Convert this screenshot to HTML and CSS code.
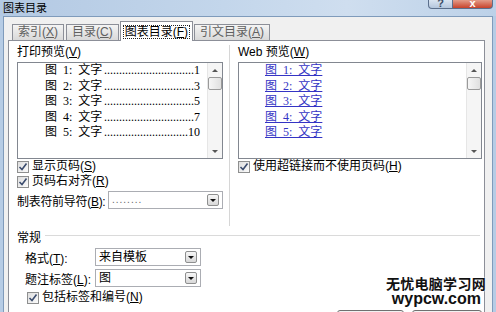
FILE: index.html
```html
<!DOCTYPE html>
<html lang="zh-CN">
<head>
    <meta charset="UTF-8">
    <title>图表目录</title>
    <link rel="stylesheet" href="styles.css">
</head>
<body>
    <div class="titlebar">
        <span class="title">图表目录</span>
        <div class="caption-btns">
            <span class="cap help">?</span>
            <span class="cap close">x</span>
        </div>
    </div>

    <div class="client">
        <div class="tabs">
            <div class="tab">索引(<u>X</u>)</div>
            <div class="tab">目录(<u>C</u>)</div>
            <div class="tab active"><span class="focus">图表目录(<u>F</u>)</span></div>
            <div class="tab">引文目录(<u>A</u>)</div>
        </div>

        <div class="panel">
            <div class="columns">
                <div class="col left">
                    <div class="label">打印预览(<u>V</u>)</div>
                    <div class="listbox">
                        <ul class="toc">
                            <li><span class="fig">图 1: 文字</span><span class="dots">..............................................</span><span class="pg">1</span></li>
                            <li><span class="fig">图 2: 文字</span><span class="dots">..............................................</span><span class="pg">3</span></li>
                            <li><span class="fig">图 3: 文字</span><span class="dots">..............................................</span><span class="pg">5</span></li>
                            <li><span class="fig">图 4: 文字</span><span class="dots">..............................................</span><span class="pg">7</span></li>
                            <li><span class="fig">图 5: 文字</span><span class="dots">..............................................</span><span class="pg">10</span></li>
                        </ul>
                        <div class="vscroll">
                            <span class="sb-arrow up"></span>
                            <span class="sb-thumb"></span>
                            <span class="sb-track"></span>
                            <span class="sb-arrow down"></span>
                        </div>
                    </div>
                    <div class="check">
                        <span class="box"><svg width="10" height="10" viewBox="0 0 10 10"><polyline points="1.5,5 4,7.5 8.5,1.5" fill="none" stroke="#3b4c6e" stroke-width="1.6"/></svg></span>
                        <span>显示页码(<u>S</u>)</span>
                    </div>
                    <div class="check">
                        <span class="box"><svg width="10" height="10" viewBox="0 0 10 10"><polyline points="1.5,5 4,7.5 8.5,1.5" fill="none" stroke="#3b4c6e" stroke-width="1.6"/></svg></span>
                        <span>页码右对齐(<u>R</u>)</span>
                    </div>
                    <div class="leader">
                        <span class="leader-label">制表符前导符(<u>B</u>):</span>
                        <div class="combo wide">
                            <span class="leader-dots">........</span>
                            <span class="combo-btn"></span>
                        </div>
                    </div>
                </div>

                <div class="col right">
                    <div class="label">Web 预览(<u>W</u>)</div>
                    <div class="listbox web">
                        <ul class="toc web">
                            <li><a class="fig">图 1: 文字</a></li>
                            <li><a class="fig">图 2: 文字</a></li>
                            <li><a class="fig">图 3: 文字</a></li>
                            <li><a class="fig">图 4: 文字</a></li>
                            <li><a class="fig">图 5: 文字</a></li>
                        </ul>
                        <div class="vscroll">
                            <span class="sb-arrow up"></span>
                            <span class="sb-thumb"></span>
                            <span class="sb-track"></span>
                            <span class="sb-arrow down"></span>
                        </div>
                    </div>
                    <div class="check">
                        <span class="box"><svg width="10" height="10" viewBox="0 0 10 10"><polyline points="1.5,5 4,7.5 8.5,1.5" fill="none" stroke="#3b4c6e" stroke-width="1.6"/></svg></span>
                        <span>使用超链接而不使用页码(<u>H</u>)</span>
                    </div>
                </div>
            </div>

            <div class="group">
                <div class="group-head"><span>常规</span><span class="rule"></span></div>
                <div class="field">
                    <span class="flabel">格式(<u>T</u>):</span>
                    <div class="combo">来自模板<span class="combo-btn"></span></div>
                </div>
                <div class="field">
                    <span class="flabel">题注标签(<u>L</u>):</span>
                    <div class="combo">图<span class="combo-btn"></span></div>
                </div>
                <div class="check inset">
                    <span class="box"><svg width="10" height="10" viewBox="0 0 10 10"><polyline points="1.5,5 4,7.5 8.5,1.5" fill="none" stroke="#3b4c6e" stroke-width="1.6"/></svg></span>
                    <span>包括标签和编号(<u>N</u>)</span>
                </div>
            </div>

            <div class="buttons">
                <span class="btn"></span>
                <span class="btn second"></span>
            </div>
        </div>
    </div>

    <div class="watermark">
        <div class="wm-cn">无忧电脑学习网</div>
        <div class="wm-en">wypcw.com</div>
    </div>
</body>
</html>
```

FILE: styles.css
```css
body {
    margin: 0;
    width: 496px;
    height: 312px;
    overflow: hidden;
    position: relative;
    background: #b6cce5;
    font-family: 'Liberation Sans', 'Noto Sans CJK SC', sans-serif;
    font-size: 12px;
    color: #000;
}

u {
    text-decoration: underline;
}

/* title bar */
.titlebar {
    height: 16px;
    display: flex;
    align-items: flex-start;
    background: linear-gradient(to right, #b3c9e3, #c3d6eb 45%, #cfdeef 70%, #bcd1e8);
}

.title {
    padding: 2px 0 0 3px;
    font-size: 11px;
    line-height: 13px;
}

.caption-btns {
    margin-left: auto;
    margin-right: 3px;
    display: flex;
}

.cap {
    height: 9px;
    line-height: 6px;
    overflow: hidden;
    text-align: center;
    font-weight: bold;
    font-size: 11px;
    box-sizing: border-box;
    border: 1px solid #5b6f8c;
    border-top: none;
}

.cap.help {
    width: 25px;
    border-radius: 0 0 0 4px;
    background: linear-gradient(#d9e4f1, #b4c6dc);
    color: #3c4c66;
}

.cap.close {
    width: 40px;
    border-left: none;
    border-radius: 0 0 4px 0;
    background: linear-gradient(#e39c89, #c7432c);
    color: #fff;
}

/* dialog client area */
.client {
    margin: 0 3px;
    border: 1px solid #7f9bbb;
    border-bottom: none;
    background: #f0f0f0;
    padding: 0 7px 0 4px;
    height: 300px;
}

.tabs {
    display: flex;
    align-items: flex-end;
    height: 23px;
    padding-left: 4px;
}

.tab {
    height: 16px;
    box-sizing: border-box;
    border: 1px solid #8c8f98;
    border-bottom: none;
    background: linear-gradient(#f4f4f4, #e6e6e6 50%, #d9d9d9);
    padding: 0 5px;
    margin-right: 2px;
    line-height: 14px;
    color: #606060;
}

.tab.active {
    height: 20px;
    margin: 0 1px -1px -1px;
    padding: 3px 2px 0 2px;
    background: #fff;
    color: #000;
    position: relative;
    z-index: 1;
}

.focus {
    display: inline-block;
    border: 1px dotted #222;
    padding: 0 1px;
    line-height: 12px;
}

.panel {
    background: #fff;
    border: 1px solid #8c8f98;
    height: 300px;
    padding-right: 2px;
}

.columns {
    display: flex;
    margin-top: 4px;
    height: 181px;
}

.col.left {
    width: 221px;
    box-sizing: border-box;
    padding-left: 8px;
    border-right: 1px solid #d6d6d6;
}

.col.right {
    flex: 1;
    padding-left: 8px;
}

.label {
    line-height: 14px;
    height: 14px;
    margin-bottom: 3px;
}

.listbox {
    display: flex;
    width: 206px;
    height: 97px;
    box-sizing: border-box;
    border: 1px solid #828790;
}

.listbox.web {
    width: 244px;
}

.toc {
    flex: 1;
    list-style: none;
    margin: 0;
    padding: 0 7px 0 27px;
    min-width: 0;
}

.toc.web {
    padding-left: 26px;
}

.toc li {
    display: flex;
    height: 15.5px;
    line-height: 15.5px;
    font-family: 'Liberation Serif', 'Noto Sans CJK SC', serif;
    font-size: 12px;
    white-space: nowrap;
}

.fig {
    word-spacing: 3px;
}

.toc.web .fig {
    color: #3434c4;
    text-decoration: underline;
}

.dots {
    flex: 1;
    overflow: hidden;
    direction: rtl;
    margin-left: 2px;
    min-width: 0;
}

.vscroll {
    width: 15px;
    box-sizing: border-box;
    background: #f5f5f5;
    border-left: 1px solid #e6e6e6;
    display: flex;
    flex-direction: column;
}

.sb-arrow {
    height: 14px;
    display: flex;
    align-items: center;
    justify-content: center;
}

.sb-arrow::before {
    content: "";
    border-left: 3px solid transparent;
    border-right: 3px solid transparent;
}

.sb-arrow.up::before {
    border-bottom: 3px solid #555;
}

.sb-arrow.down::before {
    border-top: 3px solid #555;
}

.sb-thumb {
    height: 13px;
    box-sizing: border-box;
    border: 1px solid #9a9a9a;
    border-radius: 2px;
    background: linear-gradient(to right, #f6f6f6, #e0e0e0);
}

.sb-track {
    flex: 1;
}

/* checkboxes */
.check {
    display: flex;
    align-items: center;
    height: 15px;
    line-height: 15px;
    gap: 3px;
    white-space: nowrap;
}

.col .check:first-of-type {
    margin-top: 1px;
}

.box {
    width: 12px;
    height: 12px;
    box-sizing: border-box;
    border: 1px solid #8e8f8f;
    background: linear-gradient(135deg, #dedede, #fbfbfb);
    display: flex;
    align-items: center;
    justify-content: center;
}

.leader {
    display: flex;
    align-items: center;
    width: 206px;
    margin-top: 2px;
}

.leader-label {
    white-space: nowrap;
    letter-spacing: -0.3px;
}

/* combo boxes */
.combo {
    width: 106px;
    height: 18px;
    flex-shrink: 0;
    box-sizing: border-box;
    border: 1px solid #abadb3;
    background: #fff;
    display: flex;
    align-items: center;
    padding-left: 3px;
    line-height: 16px;
}

.combo.wide {
    width: 115px;
    margin-left: auto;
}

.leader-dots {
    color: #666;
    letter-spacing: 1px;
    font-size: 10px;
}

.combo-btn {
    margin-left: auto;
    margin-right: 3px;
    width: 12px;
    height: 12px;
    box-sizing: border-box;
    border: 1px solid #8e8f8f;
    border-radius: 2px;
    background: linear-gradient(#f7f7f7, #d8d8d8);
    display: flex;
    align-items: center;
    justify-content: center;
}

.combo-btn::before {
    content: "";
    border-left: 3px solid transparent;
    border-right: 3px solid transparent;
    border-top: 3px solid #111;
}

/* general group */
.group {
    margin-top: 5px;
    padding-left: 8px;
}

.group-head {
    display: flex;
    height: 14px;
    line-height: 14px;
}

.rule {
    flex: 1;
    height: 1px;
    margin: 4px 2px 0 4px;
    background: #dadada;
}

.field {
    display: flex;
    align-items: center;
    margin-top: 3px;
    padding-left: 8px;
}

.flabel {
    width: 70px;
    white-space: nowrap;
}

.check.inset {
    margin-top: 3px;
    padding-left: 10px;
}

.buttons {
    display: flex;
    justify-content: flex-end;
    gap: 8px;
    margin-top: 5px;
}

.btn {
    width: 67px;
    height: 22px;
    box-sizing: border-box;
    border: 1px solid #707070;
    border-radius: 3px;
    background: linear-gradient(#f2f2f2, #ebebeb 50%, #dddddd);
}

.btn.second {
    width: 70px;
}

/* site watermark over the screenshot */
.watermark {
    position: absolute;
    right: 10px;
    top: 275px;
    text-align: right;
    font-weight: bold;
    color: #111;
    text-shadow: 0 0 2px #fff, 0 0 2px #fff;
}

.wm-cn {
    font-family: 'Noto Sans CJK SC', sans-serif;
    font-size: 14px;
    line-height: 17px;
    letter-spacing: 0.3px;
}

.wm-en {
    font-family: 'Liberation Sans', sans-serif;
    font-size: 16px;
    line-height: 13px;
    padding-right: 5px;
}
```
